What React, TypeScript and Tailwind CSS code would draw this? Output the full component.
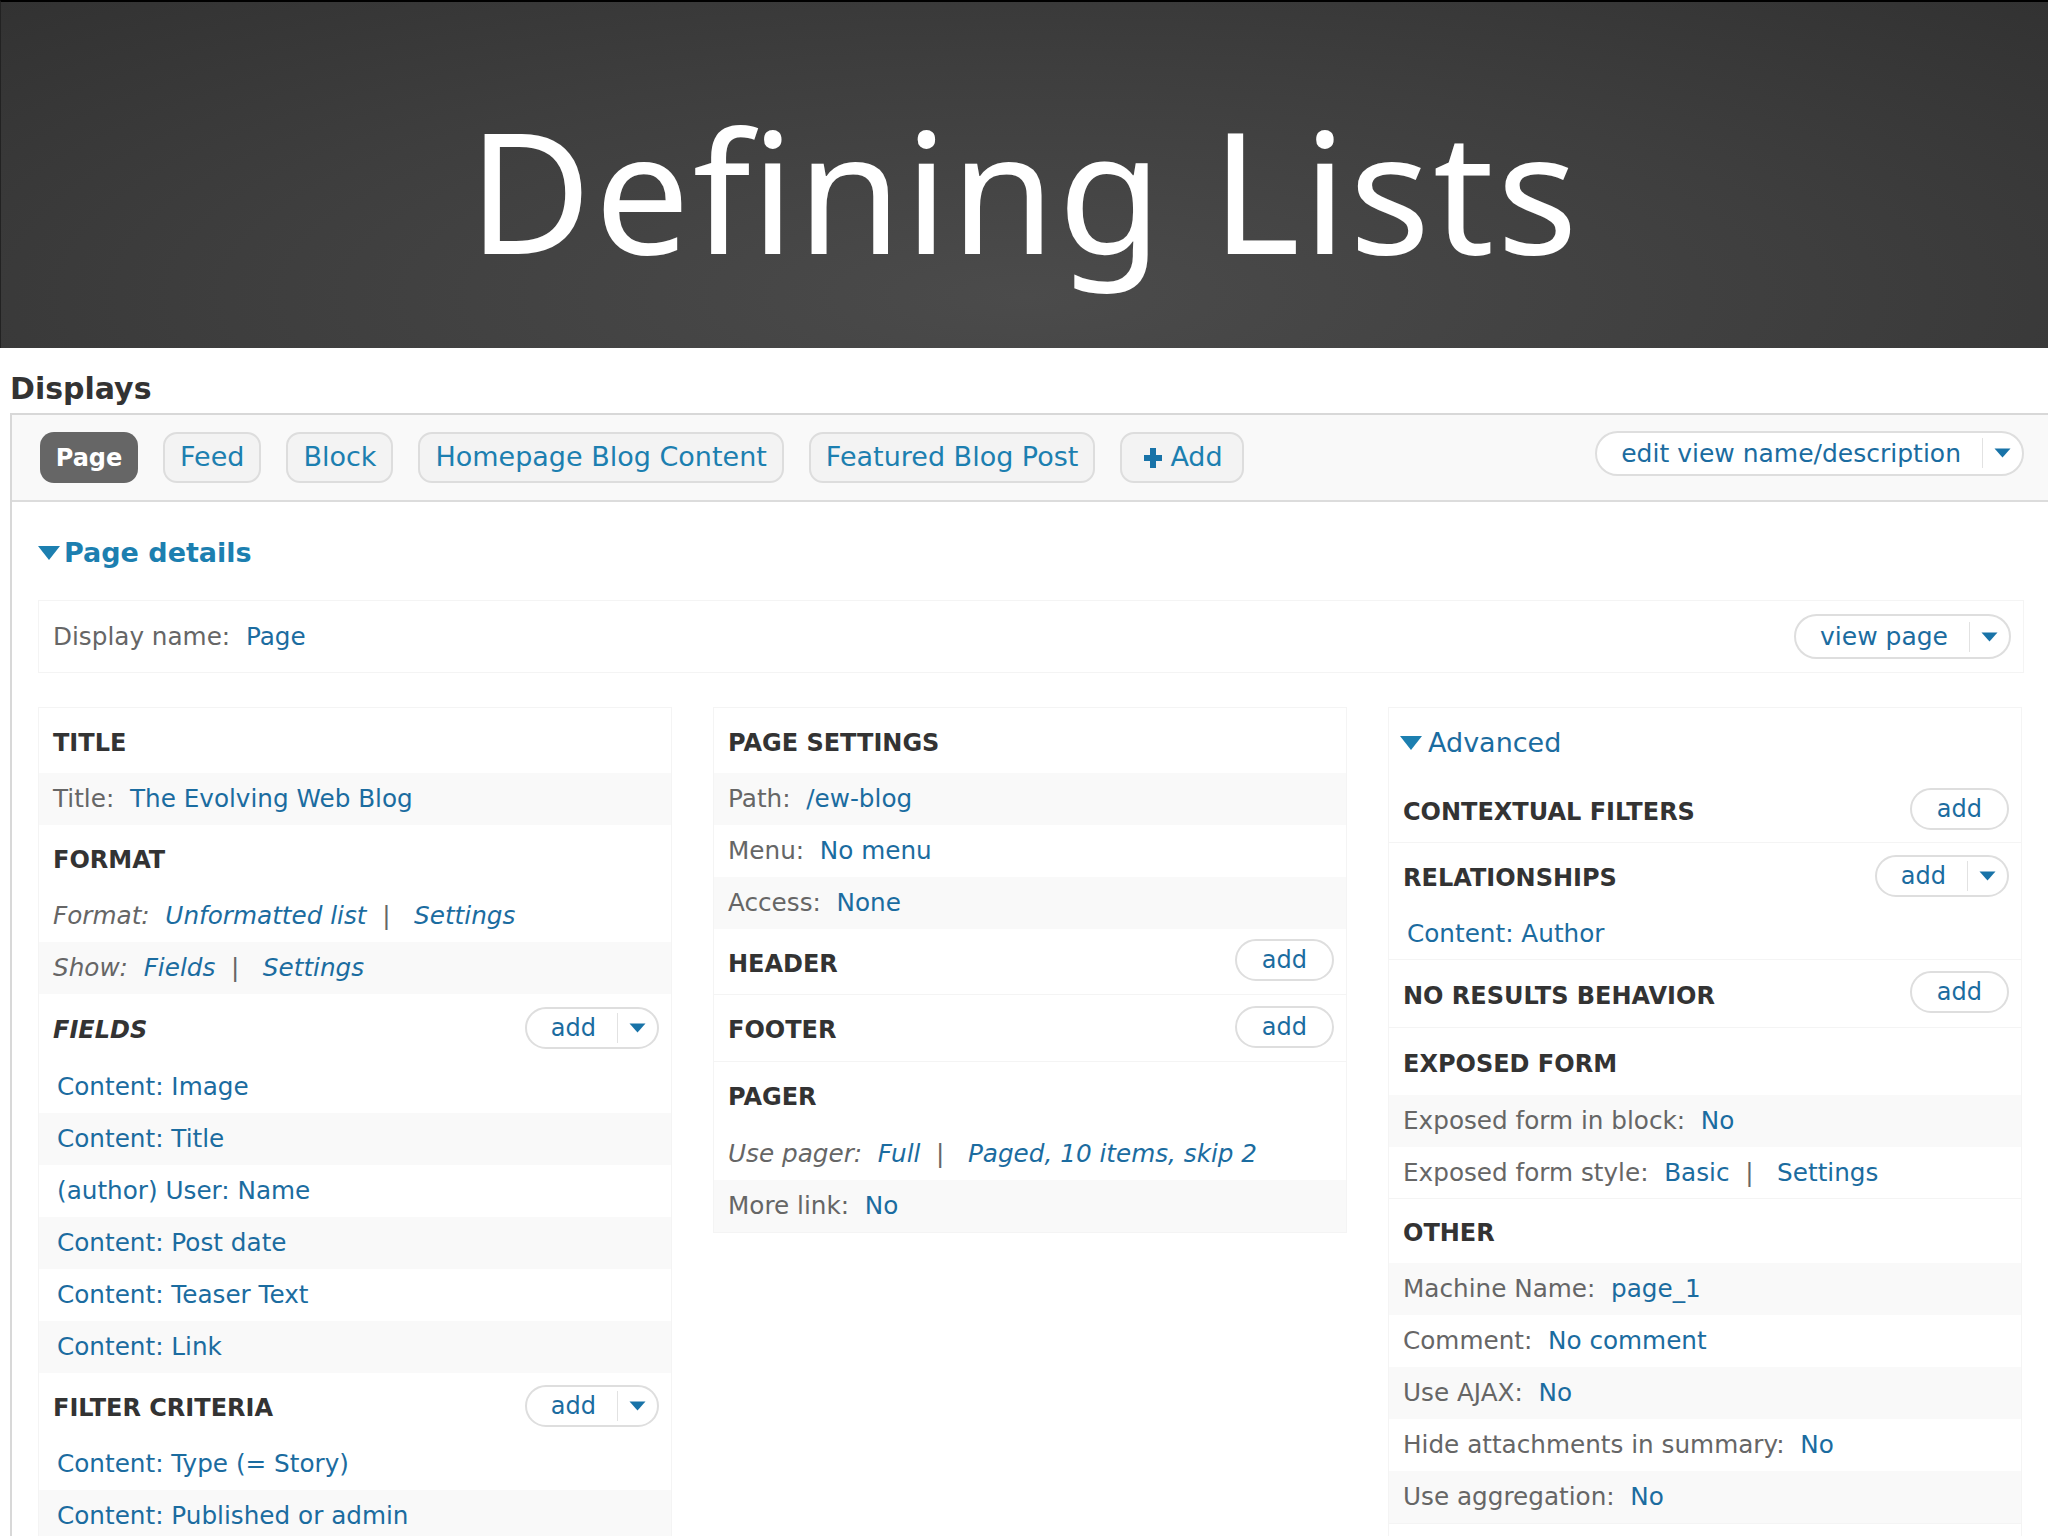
import React from "react";

const F = "font-['DejaVu_Sans',sans-serif]";

function Caret() {
  return (
    <svg width="17" height="10" viewBox="0 0 17 10" className="shrink-0">
      <path d="M0.5 0.5h16L8.5 9.5z" fill="#1873a8" />
    </svg>
  );
}

function AddBtn({ label = "add", menu = false, tall = false }: { label?: string; menu?: boolean; tall?: boolean }) {
  return (
    <div className={`flex items-center rounded-full border-2 border-[#dedede] bg-white font-normal not-italic ${tall ? "h-[45px]" : "h-[42px]"} ${!menu ? "-mt-[3px]" : ""}`}>
      <span className={`leading-none text-[#1b6ca0] ${tall ? "text-[25px]" : "text-[24px]"} ${menu ? "pl-[24px] pr-[21px]" : "px-[25px]"}`}>{label}</span>
      {menu && (
        <span className="flex h-[30px] w-[40px] items-center justify-center border-l border-[#e2e2e2]">
          <Caret />
        </span>
      )}
    </div>
  );
}

function Head({ text, btn, italic, line, h = "h-[65px]" }: { text: string; btn?: React.ReactNode; italic?: boolean; line?: boolean; h?: string }) {
  return (
    <div className={`flex items-center justify-between pl-[14px] pr-[12px] text-[24px] font-bold text-[#333333] ${line ? "border-b border-[#f4f4f4]" : ""} ${h}`}>
      <span className={`pt-[4px] ${italic ? "italic" : ""}`}>{text}</span>
      {btn}
    </div>
  );
}

function Row({ grey, children, pad = "pl-[14px]" }: { grey?: boolean; children: React.ReactNode; pad?: string }) {
  return (
    <div className={`flex h-[52px] items-center whitespace-pre text-[24.7px] text-[#666666] ${pad} ${grey ? "bg-[#f9f9f9]" : "bg-white"}`}>
      {children}
    </div>
  );
}

const L = ({ children }: { children: React.ReactNode }) => <span className="text-[#1b6ca0]">{children}</span>;

function Links({ items }: { items: string[] }) {
  return (
    <>
      {items.map((t, i) => (
        <Row key={t} grey={i % 2 === 1} pad="pl-[18px]">
          <L>{t}</L>
        </Row>
      ))}
    </>
  );
}

const Col = ({ children }: { children: React.ReactNode }) => (
  <div className="flex w-[634px] flex-col self-start border border-[#f4f4f4]">{children}</div>
);

const Tab = ({ children }: { children: React.ReactNode }) => (
  <div className="flex h-[51px] items-center rounded-[14px] border-2 border-[#dddddd] bg-[#f3f3f3] px-[15px]">{children}</div>
);

export default function App() {
  return (
    <div className={`relative h-[1536px] w-[2048px] overflow-hidden bg-white ${F}`}>
      <header className="flex h-[348px] items-center justify-center border-l border-t-2 border-l-[#222222] border-t-black bg-[radial-gradient(ellipse_at_50%_85%,#4b4b4b_0%,#3e3e3e_55%,#323232_100%)] pt-[26px]">
        <h1 className="font-['Noto_Sans',sans-serif] text-[169px] font-normal leading-none tracking-[2.8px] text-white">Deﬁning Lists</h1>
      </header>
      <div className="pl-[10px]">
        <h2 className="flex h-[65px] items-center pt-[16px] text-[30px] font-bold text-[#333333]">Displays</h2>
        <div className="border-l-2 border-t-2 border-[#d8d8d8]">
          <div className="flex h-[87px] items-center justify-between border-b-2 border-[#dcdcdc] bg-[#f9f9f9] pl-[28px] pr-[24px]">
            <div className="flex items-center gap-[25px] text-[27px] text-[#1c7fb0]">
              <div className="flex h-[51px] w-[98px] items-center justify-center rounded-[14px] bg-[#666666] text-[24px] font-bold text-white">Page</div>
              <Tab>Feed</Tab>
              <Tab>Block</Tab>
              <Tab>Homepage Blog Content</Tab>
              <Tab>Featured Blog Post</Tab>
              <div className="flex h-[51px] items-center gap-[8px] rounded-[14px] border-2 border-[#dddddd] bg-[#f3f3f3] pl-[22px] pr-[19px]">
                <svg width="18" height="20" viewBox="0 0 18 20"><path d="M6 0h6v7h6v6h-6v7H6v-7H0V7h6z" fill="#1873a8" /></svg>
                Add
              </div>
            </div>
            <div className="-mt-[9px]"><AddBtn label="edit view name/description" menu tall /></div>
          </div>
          <div className="pl-[26px] pr-[24px]">
            <div className="flex h-[98px] items-center gap-[4px] pt-[4px] text-[27px] font-bold text-[#1c7fb0]">
              <svg width="22" height="14" viewBox="0 0 22 14"><path d="M0 0h22L11 14z" fill="#1c7fb0" /></svg>
              Page details
            </div>
            <div className="flex h-[73px] items-center justify-between border border-[#f4f4f4] pl-[14px] pr-[12px] text-[24.7px] text-[#666666]">
              <span className="whitespace-pre">Display name:  <L>Page</L></span>
              <AddBtn label="view page" menu tall />
            </div>
            <div className="mt-[34px] flex gap-[41px]">
              <Col>
                <Head text="TITLE" />
                <Row grey>Title:  <L>The Evolving Web Blog</L></Row>
                <Head text="FORMAT" />
                <Row><span className="italic">Format:  <L>Unformatted list</L>  |   <L>Settings</L></span></Row>
                <Row grey><span className="italic">Show:  <L>Fields</L>  |   <L>Settings</L></span></Row>
                <Head text="FIELDS" italic h="h-[67px]" btn={<AddBtn menu />} />
                <Links items={["Content: Image", "Content: Title", "(author) User: Name", "Content: Post date", "Content: Teaser Text", "Content: Link"]} />
                <Head text="FILTER CRITERIA" btn={<AddBtn menu />} />
                <Links items={["Content: Type (= Story)", "Content: Published or admin"]} />
              </Col>
              <Col>
                <Head text="PAGE SETTINGS" />
                <Row grey>Path:  <L>/ew-blog</L></Row>
                <Row>Menu:  <L>No menu</L></Row>
                <Row grey>Access:  <L>None</L></Row>
                <Head text="HEADER" line h="h-[66px]" btn={<AddBtn />} />
                <Head text="FOOTER" line h="h-[67px]" btn={<AddBtn />} />
                <Head text="PAGER" h="h-[66px]" />
                <Row><span className="italic">Use pager:  <L>Full</L>  |   <L>Paged, 10 items, skip 2</L></span></Row>
                <Row grey>More link:  <L>No</L></Row>
              </Col>
              <Col>
                <div className="flex h-[70px] items-center gap-[6px] pl-[11px] text-[27px] text-[#1b6ca0]">
                  <svg width="22" height="14" viewBox="0 0 22 14"><path d="M0 0h22L11 14z" fill="#1c7fb0" /></svg>
                  Advanced
                </div>
                <Head text="CONTEXTUAL FILTERS" line btn={<AddBtn />} />
                <Head text="RELATIONSHIPS" btn={<AddBtn menu />} />
                <Row pad="pl-[18px] border-b border-[#f4f4f4]"><L>Content: Author</L></Row>
                <Head text="NO RESULTS BEHAVIOR" line h="h-[68px]" btn={<AddBtn />} />
                <Head text="EXPOSED FORM" h="h-[67px]" />
                <Row grey>Exposed form in block:  <L>No</L></Row>
                <Row pad="pl-[14px] border-b border-[#f4f4f4]">Exposed form style:  <L>Basic</L>  |   <L>Settings</L></Row>
                <Head text="OTHER" h="h-[64px]" />
                <Row grey>Machine Name:  <L>page_1</L></Row>
                <Row>Comment:  <L>No comment</L></Row>
                <Row grey>Use AJAX:  <L>No</L></Row>
                <Row>Hide attachments in summary:  <L>No</L></Row>
                <Row grey>Use aggregation:  <L>No</L></Row>
                <div className="h-[40px] border-t border-[#f4f4f4] bg-white" />
              </Col>
            </div>
          </div>
        </div>
      </div>
    </div>
  );
}
